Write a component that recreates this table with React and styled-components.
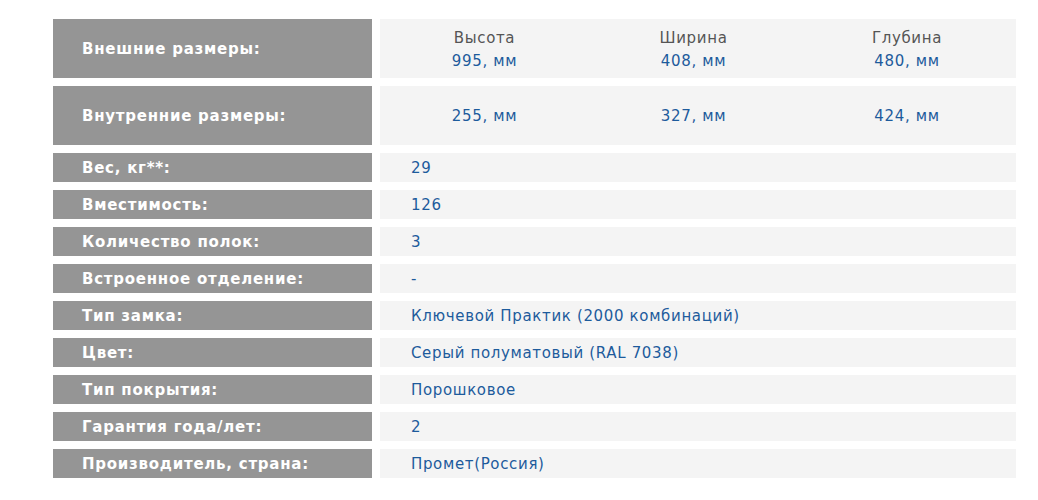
import React from "react";
import styled, { createGlobalStyle } from "styled-components";

const Global = createGlobalStyle`
  html, body { margin: 0; padding: 0; background: #ffffff; }
  body { font-family: "DejaVu Sans", Tahoma, Verdana, sans-serif; }
`;

const Table = styled.div`
  display: grid;
  grid-template-columns: 319px 636px;
  column-gap: 8px;
  row-gap: 8px;
  padding: 19px 0 0 53px;
`;

const Label = styled.div`
  background: #959595;
  color: #ffffff;
  font-weight: bold;
  font-size: 15px;
  letter-spacing: 0.75px;
  height: ${(p) => (p.$tall ? 59 : 29)}px;
  display: flex;
  align-items: center;
  padding-left: 29px;
  padding-top: 1px;
  box-sizing: border-box;
  white-space: nowrap;
`;

const Value = styled.div`
  background: #f4f4f4;
  color: #1d5b9c;
  font-size: 15px;
  letter-spacing: 0.65px;
  height: 29px;
  display: flex;
  align-items: center;
  padding-left: 31px;
  padding-top: 1px;
  box-sizing: border-box;
  white-space: nowrap;
`;

const DimValue = styled.div`
  background: #f4f4f4;
  height: 59px;
  display: grid;
  grid-template-columns: 209px 209px 218px;
  align-items: center;
  padding-top: 2px;
  box-sizing: border-box;
`;

const Dim = styled.div`
  display: flex;
  flex-direction: column;
  align-items: center;
  font-size: 15px;
  letter-spacing: 0.65px;
  line-height: 23px;
  white-space: nowrap;
`;

const DimHead = styled.span`
  color: #555555;
`;

const DimNum = styled.span`
  color: #1d5b9c;
`;

const rows = [
  ["Вес, кг**:", "29"],
  ["Вместимость:", "126"],
  ["Количество полок:", "3"],
  ["Встроенное отделение:", "-"],
  ["Тип замка:", "Ключевой Практик (2000 комбинаций)"],
  ["Цвет:", "Серый полуматовый (RAL 7038)"],
  ["Тип покрытия:", "Порошковое"],
  ["Гарантия года/лет:", "2"],
  ["Производитель, страна:", "Промет(Россия)"],
];

export default function App() {
  return (
    <>
      <Global />
      <Table>
        <Label $tall>Внешние размеры:</Label>
        <DimValue>
          <Dim><DimHead>Высота</DimHead><DimNum>995, мм</DimNum></Dim>
          <Dim><DimHead>Ширина</DimHead><DimNum>408, мм</DimNum></Dim>
          <Dim><DimHead>Глубина</DimHead><DimNum>480, мм</DimNum></Dim>
        </DimValue>
        <Label $tall>Внутренние размеры:</Label>
        <DimValue>
          <Dim><DimNum>255, мм</DimNum></Dim>
          <Dim><DimNum>327, мм</DimNum></Dim>
          <Dim><DimNum>424, мм</DimNum></Dim>
        </DimValue>
        {rows.map(([l, v]) => (
          <React.Fragment key={l}>
            <Label>{l}</Label>
            <Value>{v}</Value>
          </React.Fragment>
        ))}
      </Table>
    </>
  );
}
